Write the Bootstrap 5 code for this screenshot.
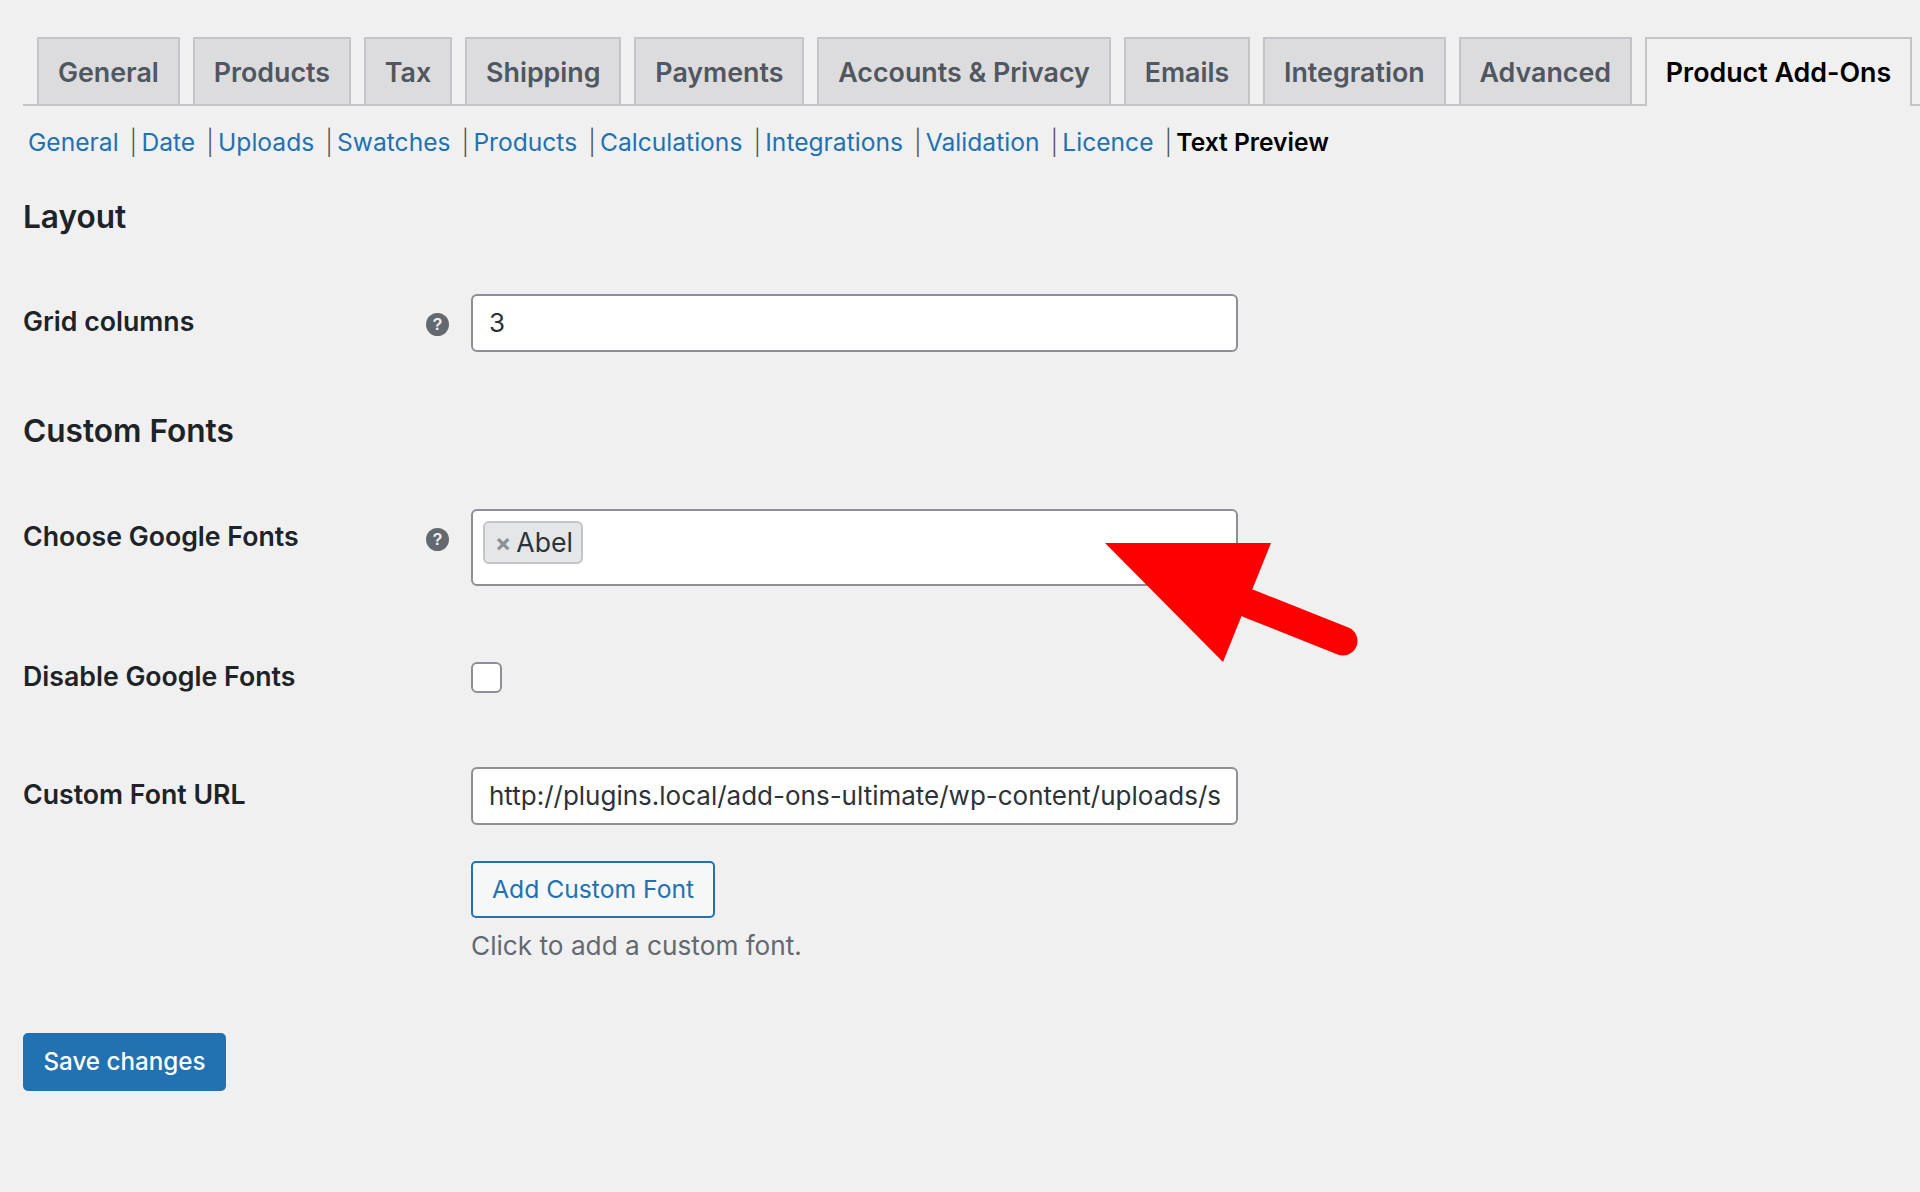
<!DOCTYPE html>
<html lang="en">
<head>
<meta charset="utf-8">
<title>Product Add-Ons settings</title>
<link href="https://cdn.jsdelivr.net/npm/bootstrap@5.3.0/dist/css/bootstrap.min.css" rel="stylesheet">
<style>
body{background:#f0f0f1;font-family:Inter,"Liberation Sans",sans-serif;color:#1d2327;font-size:26px;height:1192px;overflow:hidden}
.wp-wrap{padding:37px 0 0 23px}
.wp-tabs{gap:13.05px;padding-left:14px;border-bottom:2px solid #c3c4c7;flex-wrap:nowrap;height:69px}
.wp-tabs .nav-link{background:#dcdcde;border:2px solid #c3c4c7;border-bottom:0;border-radius:0;color:#50575e;font-weight:600;font-size:26.8px;line-height:34px;padding:16px 18.9px 15px;margin:0;height:67px;white-space:nowrap}
.wp-tabs .nav-link.active{background:#f0f0f1;color:#000;border-color:#c3c4c7;height:69px;position:relative;margin-bottom:-2px}
.wp-sub{display:flex;list-style:none;margin:19px 0 0;padding:0 0 0 5px;font-size:24.6px;line-height:34px;color:#50575e;white-space:nowrap}
.wp-sub a{color:#2271b1;text-decoration:none}
.wp-sub li+li::before{content:"|";margin:0 4.2px 0 11px;font-weight:300}
.wp-sub strong{color:#000;font-weight:600}
.wp-h{font-size:31.6px;font-weight:600;line-height:40px;margin:0;color:#1d2327}
.wp-h-layout{margin-top:38px}
.wp-h-fonts{margin-top:59px}
.wp-row{display:flex;align-items:flex-start}
.wp-row-grid{margin-top:57px}
.wp-row-choose{margin-top:58px}
.wp-row-disable{margin-top:76px}
.wp-row-url{margin-top:74px}
.wp-lab{width:448px;font-weight:600;font-size:26.7px;line-height:34px;margin:0;display:flex;justify-content:space-between;padding-right:22px}
.wp-lab-top{margin-top:10px}
.wp-lab-check{margin-top:-3px}
.wp-help{width:23px;height:23px;flex:none;margin-top:8.5px}
.wp-field{width:767px}
.wp-field .form-control{height:58px;border:2px solid #8c8f94;border-radius:6px;font-size:26px;padding:0 16px 2px;color:#2c3338;box-shadow:none}
.wp-select{height:77px;background:#fff;border:2px solid #8c8f94;border-radius:6px;padding:10px 10px}
.wp-chip{display:inline-flex;align-items:center;gap:5px;height:43px;background:#e4e6e7;border:2px solid #c3c4c7;border-radius:6px;padding:0 8px 0 10px;color:#2c3338;font-size:26.6px}
.wp-chip i{font-style:normal;font-weight:700;color:#8c8f94;font-size:24px}
.wp-check.form-check-input{width:31px;height:31px;margin:0;border:2px solid #8c8f94;border-radius:6px;background-color:#fff;display:block}
.wp-field .wp-add{height:57px;border:2px solid #2271b1;color:#2271b1;background:#f6f7f7;border-radius:5px;font-size:24.7px;padding:0 19px;margin-top:36px;display:block}
.wp-desc{margin:11px 0 0;font-size:26.2px;line-height:34px;color:#646970}
.wp-save{height:58px;width:203px;background:#2271b1;border:2px solid #2271b1;border-radius:5px;font-size:24.2px;padding:0;color:#fff;font-weight:500;margin-top:70px}
.wp-arrow{position:absolute;left:0;top:0;pointer-events:none}
</style>
</head>
<body>
<div class="wp-wrap">
  <ul class="nav nav-tabs wp-tabs">
    <li class="nav-item"><a class="nav-link" href="#">General</a></li>
    <li class="nav-item"><a class="nav-link" href="#">Products</a></li>
    <li class="nav-item"><a class="nav-link" href="#">Tax</a></li>
    <li class="nav-item"><a class="nav-link" href="#">Shipping</a></li>
    <li class="nav-item"><a class="nav-link" href="#">Payments</a></li>
    <li class="nav-item"><a class="nav-link" href="#">Accounts &amp; Privacy</a></li>
    <li class="nav-item"><a class="nav-link" href="#">Emails</a></li>
    <li class="nav-item"><a class="nav-link" href="#">Integration</a></li>
    <li class="nav-item"><a class="nav-link" href="#">Advanced</a></li>
    <li class="nav-item"><a class="nav-link active" href="#">Product Add-Ons</a></li>
  </ul>
  <ul class="wp-sub">
    <li><a href="#">General</a></li>
    <li><a href="#">Date</a></li>
    <li><a href="#">Uploads</a></li>
    <li><a href="#">Swatches</a></li>
    <li><a href="#">Products</a></li>
    <li><a href="#">Calculations</a></li>
    <li><a href="#">Integrations</a></li>
    <li><a href="#">Validation</a></li>
    <li><a href="#">Licence</a></li>
    <li><strong>Text Preview</strong></li>
  </ul>
  <h2 class="wp-h wp-h-layout">Layout</h2>
  <div class="wp-row wp-row-grid">
    <label class="wp-lab wp-lab-top">Grid columns
      <svg class="wp-help" viewBox="0 0 24 24"><circle cx="12" cy="12" r="12" fill="#646970"/><text x="12" y="18" text-anchor="middle" font-family="Liberation Sans" font-weight="700" font-size="17" fill="#f0f0f1">?</text></svg>
    </label>
    <div class="wp-field"><input class="form-control" value="3"></div>
  </div>
  <h2 class="wp-h wp-h-fonts">Custom Fonts</h2>
  <div class="wp-row wp-row-choose">
    <label class="wp-lab wp-lab-top">Choose Google Fonts
      <svg class="wp-help" viewBox="0 0 24 24"><circle cx="12" cy="12" r="12" fill="#646970"/><text x="12" y="18" text-anchor="middle" font-family="Liberation Sans" font-weight="700" font-size="17" fill="#f0f0f1">?</text></svg>
    </label>
    <div class="wp-field"><div class="wp-select"><span class="wp-chip"><i>×</i>Abel</span></div></div>
  </div>
  <div class="wp-row wp-row-disable">
    <label class="wp-lab wp-lab-check">Disable Google Fonts</label>
    <div class="wp-field"><input class="form-check-input wp-check" type="checkbox"></div>
  </div>
  <div class="wp-row wp-row-url">
    <label class="wp-lab wp-lab-top">Custom Font URL</label>
    <div class="wp-field">
      <input class="form-control" value="http://plugins.local/add-ons-ultimate/wp-content/uploads/sites/2/fonts/custom.ttf">
      <button class="btn wp-add" type="button">Add Custom Font</button>
      <p class="wp-desc">Click to add a custom font.</p>
    </div>
  </div>
  <button class="btn wp-save" type="button">Save changes</button>
</div>
<svg class="wp-arrow" width="1920" height="1192" viewBox="0 0 1920 1192"><line x1="1250" y1="604" x2="1343" y2="641" stroke="#fe0000" stroke-width="29" stroke-linecap="round"/><polygon points="1105,543 1271,543 1223,662" fill="#fe0000"/></svg>
<script src="https://cdn.jsdelivr.net/npm/bootstrap@5.3.0/dist/js/bootstrap.bundle.min.js"></script>
</body>
</html>
